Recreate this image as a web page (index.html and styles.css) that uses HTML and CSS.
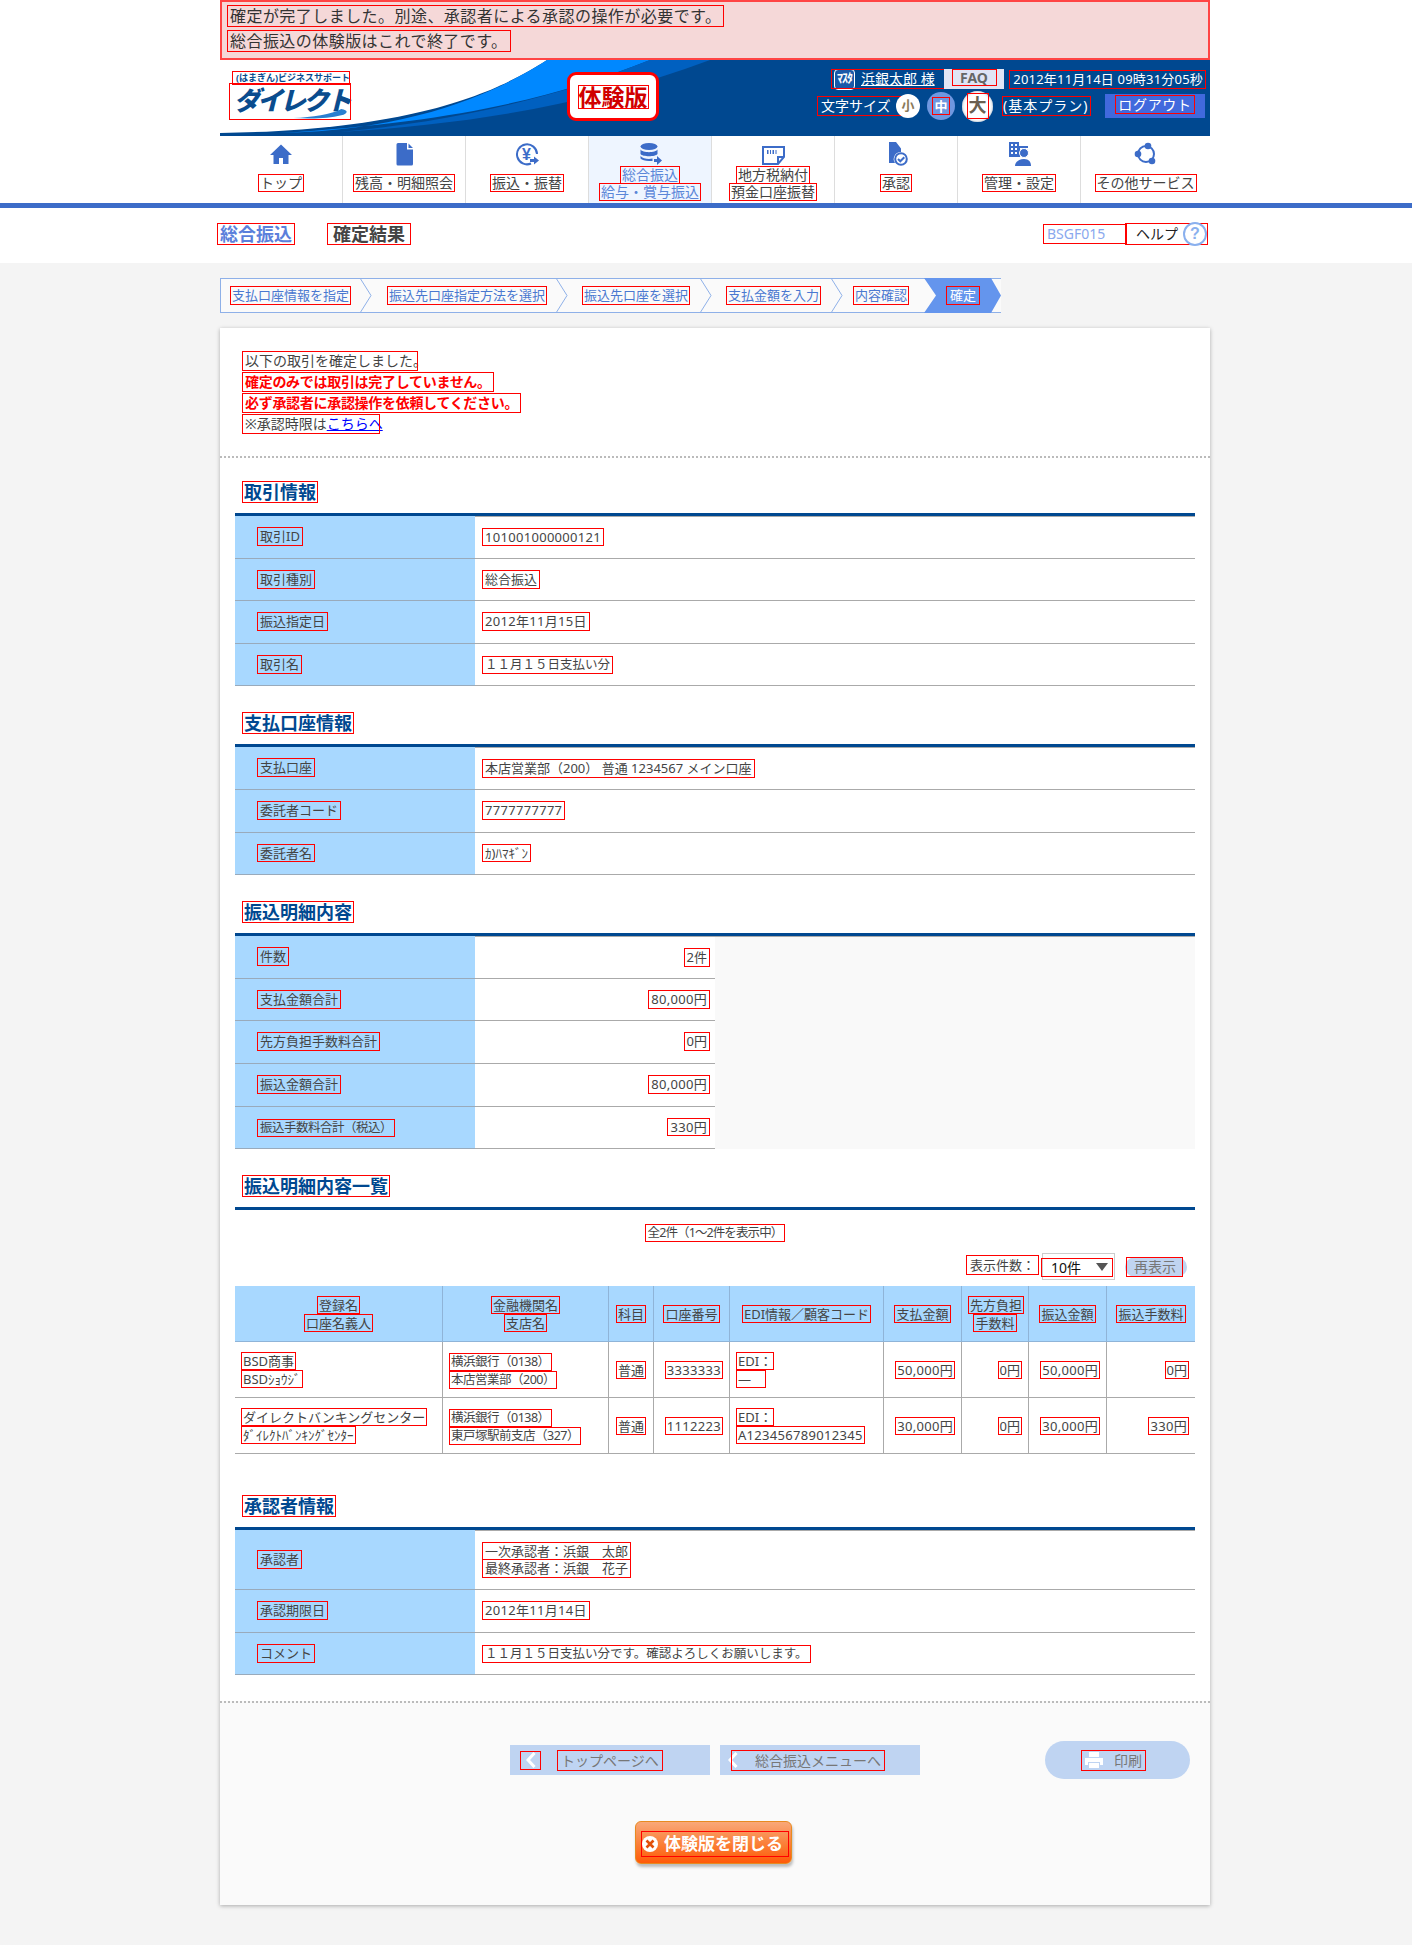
FILE: index.html
```html
<!DOCTYPE html>
<html lang="ja">
<head>
<meta charset="utf-8">
<title>確定結果</title>
<link rel="stylesheet" href="styles.css">
</head>
<body>
<div class="wrap">
  <div class="notice">
    <div><span class="m">確定が完了しました。別途、承認者による承認の操作が必要です。</span></div>
    <div><span class="m">総合振込の体験版はこれで終了です。</span></div>
  </div>
  <header class="head">
    <svg class="swoosh" viewBox="0 0 990 76" preserveAspectRatio="none">
      <path fill="#fff" d="M0 0H327C280 30 200 70 0 73Z"/>
      <path fill="#0088ff" d="M327 0C280 30 200 70 60 73C230 62 330 40 430 0Z"/>
      <path fill="#0060c0" d="M430 0C330 40 230 62 120 72C250 64 370 45 490 0Z"/>
    </svg>
    <div class="logo">
      <span class="m logo-sub">(はまぎん)ビジネスサポート</span>
      <span class="m logo-main">ダイレクト<svg class="logo-swash" viewBox="0 0 60 12"><path fill="#2a7fd0" d="M0 11C20 10 42 7 52 1C60 2 60 6 52 8C38 12 18 12 0 11Z"/></svg></span>
    </div>
    <div class="badge"><span class="m">体験版</span></div>
    <div class="head-right">
      <div class="row1">
        <span class="m user"><span class="master">ﾏｽﾀ</span><a class="uname">浜銀太郎 様</a></span>
        <span class="faq"><span class="m">FAQ</span></span>
        <span class="m date">2012年11月14日 09時31分05秒</span>
      </div>
      <div class="row2">
        <span class="m fs-label">文字サイズ</span>
        <span class="c c-s">小</span>
        <span class="c c-m"><span class="m">中</span></span>
        <span class="c c-l"><span class="m">大</span></span>
        <span class="m plan">(基本プラン)</span>
        <span class="logout"><span class="m">ログアウト</span></span>
      </div>
    </div>
  </header>
  <nav class="nav">
    <a class="nav-i">
      <svg class="ico" viewBox="0 0 24 24"><path d="M12 2.500 1 13h3.500v9h5.500v-6h4v6h5.500v-9H23z"/></svg>
      <span class="lab"><span class="m">トップ</span></span>
    </a>
    <a class="nav-i">
      <svg class="ico" viewBox="0 0 24 24"><path d="M6 1h9l0 6.500h6V22a1.500 1.500 0 0 1-1.500 1.500H6A1.500 1.500 0 0 1 4.500 22V2.500A1.500 1.500 0 0 1 6 1zM16.500 1.500l4.500 4.500h-4.500z"/></svg>
      <span class="lab"><span class="m">残高・明細照会</span></span>
    </a>
    <a class="nav-i">
      <svg class="ico" viewBox="0 0 24 24"><path class="ln" d="M16 21.500A10 10 0 1 1 22 12"/><text class="yen" x="11.500" y="17.500">¥</text><path d="M15 17h4v-2.500l5 4-5 4V20h-4z"/></svg>
      <span class="lab"><span class="m">振込・振替</span></span>
    </a>
    <a class="nav-i on">
      <svg class="ico" viewBox="0 0 24 24"><ellipse cx="11" cy="4.500" rx="8.500" ry="3.500"/><path d="M2.500 7.500c2 3.500 15 3.500 17 0V12c-2 3-15 3-17 0zM2.500 14c2 3 9 3.500 12 2.500V19H11c-4 0-7-1-8.500-2.500zM16 17h3v-3l5 4.500-5 4.500v-3h-3z"/></svg>
      <span class="lab"><span class="m">総合振込</span><span class="m">給与・賞与振込</span></span>
    </a>
    <a class="nav-i">
      <svg class="ico" viewBox="0 0 24 24"><path class="ln" d="M2 5h21v10l-6 7H2z"/><path d="M16 21v-7h7v2h-5v5zM6 8h1.500v4H6zM9 8h1v4H9zM11.500 8H13v4h-1.500zM14.500 8h1v4h-1z"/></svg>
      <span class="lab"><span class="m">地方税納付</span><span class="m">預金口座振替</span></span>
    </a>
    <a class="nav-i">
      <svg class="ico" viewBox="0 0 24 24"><path d="M5 0h7l5 6.500V10a7 7 0 0 0-6 11H5z"/><circle class="ln" cx="17" cy="17" r="5.800"/><path class="ln" d="m14 17 2.300 2.300 4-4"/></svg>
      <span class="lab"><span class="m">承認</span></span>
    </a>
    <a class="nav-i">
      <svg class="ico" viewBox="0 0 24 24"><path d="M2 0h10v4h9v2H13v9H2z"/><path class="hole" d="M4 2h2v2H4zM8 2h2v2H8zM4 6h2v2H4zM8 6h2v2H8zM4 10h2v2H4zM8 10h2v2H8z"/><circle class="ring" cx="17" cy="11" r="4.500"/><path d="M8 24c0-4 4-7 9-7s7 3 7 7z"/></svg>
      <span class="lab"><span class="m">管理・設定</span></span>
    </a>
    <a class="nav-i">
      <svg class="ico" viewBox="0 0 24 24"><circle class="ln" cx="12" cy="12" r="8"/><circle cx="14" cy="4" r="3.300"/><circle cx="4" cy="12" r="3.300"/><circle cx="18" cy="19" r="3.300"/></svg>
      <span class="lab"><span class="m">その他サービス</span></span>
    </a>
  </nav>
</div>
<div class="rule"></div>
<div class="titlebar">
  <div class="titlebar-in">
    <span class="m t-a">総合振込</span>
    <span class="m t-b">確定結果</span>
    <span class="m code">BSGF015</span>
    <span class="m help">ヘルプ<span class="q">?</span></span>
  </div>
</div>
<main class="wrap">
  <ol class="steps">
    <li class="st st1"><span class="m">支払口座情報を指定</span></li><li class="chev"><svg viewBox="0 0 12 35"><path d="M0 0l11 17.500L0 35"/></svg></li>
    <li class="st st2"><span class="m">振込先口座指定方法を選択</span></li><li class="chev"><svg viewBox="0 0 12 35"><path d="M0 0l11 17.500L0 35"/></svg></li>
    <li class="st st3"><span class="m">振込先口座を選択</span></li><li class="chev"><svg viewBox="0 0 12 35"><path d="M0 0l11 17.500L0 35"/></svg></li>
    <li class="st st4"><span class="m">支払金額を入力</span></li><li class="chev"><svg viewBox="0 0 12 35"><path d="M0 0l11 17.500L0 35"/></svg></li>
    <li class="st st5"><span class="m">内容確認</span></li>
    <li class="st st6"><span class="m">確定</span></li>
  </ol>
  <div class="card">
    <div class="intro">
      <p><span class="m i1">以下の取引を確定しました。</span></p>
      <p class="warn"><span class="m">確定のみでは取引は完了していません。</span></p>
      <p class="warn"><span class="m">必ず承認者に承認操作を依頼してください。</span></p>
      <p><span class="m i4">※承認時限は<a class="lnk">こちらへ</a></span></p>
    </div>

    <section class="sec first">
      <h3><span class="m">取引情報</span></h3>
      <table class="kv">
        <tr><th><span class="m">取引ID</span></th><td><span class="m n">101001000000121</span></td></tr>
        <tr><th><span class="m">取引種別</span></th><td><span class="m">総合振込</span></td></tr>
        <tr><th><span class="m">振込指定日</span></th><td><span class="m n">2012年11月15日</span></td></tr>
        <tr><th><span class="m">取引名</span></th><td><span class="m fz">１１月１５日支払い分</span></td></tr>
      </table>
    </section>

    <section class="sec">
      <h3><span class="m">支払口座情報</span></h3>
      <table class="kv">
        <tr><th><span class="m">支払口座</span></th><td><span class="m">本店営業部（200） 普通 1234567 メイン口座</span></td></tr>
        <tr><th><span class="m">委託者コード</span></th><td><span class="m n">7777777777</span></td></tr>
        <tr><th><span class="m">委託者名</span></th><td><span class="m">ｶ)ﾊﾏｷﾞﾝ</span></td></tr>
      </table>
    </section>

    <section class="sec">
      <h3><span class="m">振込明細内容</span></h3>
      <table class="kv half">
        <tr><th><span class="m">件数</span></th><td class="r"><span class="m">2件</span></td><td class="blank" rowspan="5"></td></tr>
        <tr><th><span class="m">支払金額合計</span></th><td class="r"><span class="m n">80,000円</span></td></tr>
        <tr><th><span class="m">先方負担手数料合計</span></th><td class="r"><span class="m">0円</span></td></tr>
        <tr><th><span class="m">振込金額合計</span></th><td class="r"><span class="m n">80,000円</span></td></tr>
        <tr><th><span class="m fw">振込手数料合計（税込）</span></th><td class="r"><span class="m n">330円</span></td></tr>
      </table>
    </section>

    <section class="sec">
      <h3><span class="m">振込明細内容一覧</span></h3>
      <div class="count"><span class="m fw">全2件（1～2件を表示中）</span></div>
      <div class="ctrl">
        <span class="m ctl-l">表示件数：</span>
        <span class="sel"><span class="m sel-in">10件<i class="tri"></i></span></span>
        <span class="redo"><span class="m">再表示</span></span>
      </div>
      <table class="list">
        <colgroup><col class="c1"><col class="c2"><col class="c3"><col class="c4"><col class="c5"><col class="c6"><col class="c7"><col class="c8"><col class="c9"></colgroup>
        <thead>
          <tr>
            <th><span class="m">登録名</span><br><span class="m">口座名義人</span></th>
            <th><span class="m">金融機関名</span><br><span class="m">支店名</span></th>
            <th><span class="m">科目</span></th>
            <th><span class="m">口座番号</span></th>
            <th><span class="m">EDI情報／顧客コード</span></th>
            <th><span class="m">支払金額</span></th>
            <th><span class="m">先方負担</span><br><span class="m">手数料</span></th>
            <th><span class="m">振込金額</span></th>
            <th><span class="m">振込手数料</span></th>
          </tr>
        </thead>
        <tbody>
          <tr>
            <td><span class="m">BSD商事</span><br><span class="m">BSDｼｮｳｼﾞ</span></td>
            <td><span class="m fw">横浜銀行（0138）</span><br><span class="m fw">本店営業部（200）</span></td>
            <td class="ct"><span class="m">普通</span></td>
            <td class="r"><span class="m n">3333333</span></td>
            <td><span class="m">EDI：</span><br><span class="m dash">—</span></td>
            <td class="r"><span class="m n">50,000円</span></td>
            <td class="r"><span class="m">0円</span></td>
            <td class="r"><span class="m n">50,000円</span></td>
            <td class="r"><span class="m">0円</span></td>
          </tr>
          <tr>
            <td><span class="m">ダイレクトバンキングセンター</span><br><span class="m">ﾀﾞｲﾚｸﾄﾊﾞﾝｷﾝｸﾞｾﾝﾀｰ</span></td>
            <td><span class="m fw">横浜銀行（0138）</span><br><span class="m fw">東戸塚駅前支店（327）</span></td>
            <td class="ct"><span class="m">普通</span></td>
            <td class="r"><span class="m n">1112223</span></td>
            <td><span class="m">EDI：</span><br><span class="m n">A123456789012345</span></td>
            <td class="r"><span class="m n">30,000円</span></td>
            <td class="r"><span class="m">0円</span></td>
            <td class="r"><span class="m n">30,000円</span></td>
            <td class="r"><span class="m n">330円</span></td>
          </tr>
        </tbody>
      </table>
    </section>

    <section class="sec last">
      <h3><span class="m">承認者情報</span></h3>
      <table class="kv">
        <tr class="tall"><th><span class="m">承認者</span></th><td><span class="m">一次承認者：浜銀　太郎</span><br><span class="m">最終承認者：浜銀　花子</span></td></tr>
        <tr><th><span class="m">承認期限日</span></th><td><span class="m n">2012年11月14日</span></td></tr>
        <tr><th><span class="m">コメント</span></th><td><span class="m fz">１１月１５日支払い分です。確認よろしくお願いします。</span></td></tr>
      </table>
    </section>

    <div class="foot">
      <div class="actions">
        <a class="btn btn1"><span class="m cm"><svg class="cv" viewBox="0 0 10 16"><path d="M8.500 1 2 8l6.500 7"/></svg></span><span class="m">トップページへ</span></a>
        <a class="btn btn2"><span class="m bm"><svg class="cv" viewBox="0 0 10 16"><path d="M8.500 1 2 8l6.500 7"/></svg><span class="bt">総合振込メニューへ</span></span></a>
        <a class="print"><span class="m pm"><svg class="pr" viewBox="0 0 18 16"><path fill="#fff" d="M4 0h10v5H4zM0 6h18v7h-3v-3H3v3H0zM4 11h10v5H4z"/></svg><span>印刷</span></span></a>
      </div>
      <a class="close"><span class="m cl"><svg class="x" viewBox="0 0 16 16"><circle cx="8" cy="8" r="8" fill="#fff"/><path d="m4.500 4.500 7 7m0-7-7 7" stroke="#e2500a" stroke-width="2.600" fill="none"/></svg>体験版を閉じる</span></a>
    </div>
  </div>
</main>
</body>
</html>
```
FILE: styles.css
```css
*{box-sizing:border-box}
html,body{margin:0;padding:0}
body{background:#f4f4f4;color:#444;font:13px/1.35 "Noto Sans","Noto Sans CJK JP",sans-serif;height:1945px;overflow:hidden;position:relative}
body::before{content:"";position:absolute;left:0;right:0;top:0;height:203px;background:#fff;z-index:-1}
.wrap{width:990px;margin-left:220px}
.m{display:inline-block;outline:1px solid #f00;padding:0 2px;line-height:1.3}
.n{letter-spacing:.3px}
.fw{font-size:12.500px;letter-spacing:-.5px}
.fz{font-size:12.500px}

.notice{height:60px;background:#f5d8d8;border:2px solid #f44;padding:2px 6px 0;font-size:16px;letter-spacing:.45px;color:#333;line-height:24px}
.notice div{height:24.500px}
.notice .m{line-height:20px}

.head{position:relative;height:76px;background:#004890;display:flex;overflow:hidden}
.swoosh{position:absolute;inset:0;width:100%;height:100%}
.logo{position:relative;width:135px;margin-left:11px;padding-top:12px;display:flex;flex-direction:column;align-items:flex-start;color:#0a4c8e}
.logo-sub{font-size:9px;font-weight:700;width:116px;height:12px;line-height:12px;white-space:nowrap;padding:0 3px;margin-left:2px;outline-offset:0}
.logo-main{position:relative;margin:0 0 0 -1px;width:120px;height:35px;font-size:26px;font-weight:900;font-style:italic;line-height:33px;letter-spacing:-3px;white-space:nowrap;padding:0 4px}
.logo-swash{position:absolute;right:0;bottom:0;width:58px;height:11px}
.badge{position:relative;margin:12px 0 0 201px;width:92px;height:49px;background:#fff;border:3px solid #f00;border-radius:9px;display:flex;align-items:center;justify-content:center;color:#d00000;font-size:23px;font-weight:700}
.badge .m{padding:0;line-height:22px}
.head-right{position:relative;margin-left:auto;padding:9px 5px 0 0;color:#fff;display:flex;flex-direction:column;align-items:flex-end;gap:5px}
.row1,.row2{display:flex;align-items:center;white-space:nowrap}
.row1{height:20px;font-size:13.500px}
.user{display:inline-flex;align-items:center;width:115px;height:18px;padding:0 0 0 2px}
.master{width:21px;height:21px;flex:none;border:1.500px solid #fff;border-radius:4px;background:#1a5aa8;font-size:12px;font-weight:700;line-height:18px;text-align:center;overflow:hidden;letter-spacing:-1px}
.uname{text-decoration:underline;margin-left:6px;font-size:14px}
.faq{width:60px;height:20px;background:#e0e4f5;color:#666;font-weight:700;font-size:14px;text-align:center;margin-left:-3px;margin-right:6px}
.faq .m{line-height:15px;width:43px;padding:0}
.date{font-size:13px;letter-spacing:.2px;line-height:17px;padding:0 2px;width:195px;text-align:right}
.row2{height:24px}
.fs-label{font-size:14px;padding:0 18px 0 3px;margin-right:-10px;line-height:18px;width:88px}
.c{display:flex;align-items:center;justify-content:center;border-radius:50%;font-weight:700;flex:none}
.c .m{padding:0 1px}
.c-s{width:24px;height:24px;background:#fff;color:#8a7a5a;font-size:13px;margin-right:7px}
.c-m{width:28px;height:28px;background:#6f97e0;color:#fff;font-size:13px;margin-right:7px}
.c-l{width:31px;height:31px;background:#fff;color:#6a5f50;font-size:18px;box-shadow:inset 0 0 3px #9ab;margin-right:10px}
.plan{font-size:14px;padding:0;margin-right:15px;line-height:18px;letter-spacing:1px;width:87px}
.logout{width:100px;height:24px;background:#4169dd;font-size:14px;text-align:center;letter-spacing:.7px;padding-top:2px}
.logout .m{line-height:17px;padding:0 2px}

.nav{display:flex;height:67px;background:#fff}
.nav-i{width:123px;flex:none;display:flex;flex-direction:column;align-items:center;border-right:1px solid #ddd;padding-top:6px;color:#444;font-size:14px}
.nav-i:last-child{border-right:0;flex:1}
.nav-i.on{background:#eef5ff;color:#5a86d8}
.ico{width:24px;height:24px;fill:#3c6cc8;flex:none}
.ico .ln{fill:none;stroke:#3c6cc8;stroke-width:2}
.ico .hole{fill:#fff}
.ico .ring{stroke:#fff;stroke-width:1}
.yen{font:700 16px "Liberation Sans",sans-serif;text-anchor:middle;fill:#3c6cc8}
.lab{flex:1;display:flex;flex-direction:column;align-items:center;justify-content:center;padding-bottom:3px}
.lab .m{line-height:16px;padding:0 1px;white-space:nowrap}
.lab .m+.m{margin-top:1px}

.rule{height:5px;background:#3c6cc8}
.titlebar{height:55px;background:#fff}
.titlebar-in{width:990px;margin-left:218px;height:100%;display:flex;align-items:center;font-size:18px;padding-bottom:3px}
.t-a{color:#5b7fdb;font-weight:700;line-height:20px}
.t-b{color:#444;font-weight:700;margin-left:34px;line-height:20px;padding:0 5px}
.code{margin-left:auto;font-size:14px;color:#8aa8ee;width:82px;line-height:18px;padding:0 3px}
.help{position:relative;font-size:14px;color:#222;width:81px;line-height:20px;padding-left:10px;margin-right:1px}
.q{position:absolute;right:0;top:-2px;width:24px;height:24px;border:2.500px solid #8ab0ee;border-radius:50%;text-align:center;font:700 16px/19px "Liberation Sans",sans-serif;color:#8ab0ee}

.steps{list-style:none;margin:15px 0 0;padding:0;display:flex;height:35px;width:781px;font-size:13px;color:#4a78d0;background:#fafafa;box-shadow:inset 0 1px #8eb0e8,inset 0 -1px #8eb0e8,inset 1px 0 #8eb0e8}
.st{display:flex;align-items:center;flex:none;white-space:nowrap}
.chev{flex:none;width:12px;height:35px}
.chev svg{display:block;width:12px;height:35px;fill:none;stroke:#8eb0e8}
.st .m{padding:0 1px;line-height:17px}
.st1{width:140px;padding-left:11px}
.st2{width:184px;padding-left:16px}
.st3{width:132px;padding-left:15px}
.st4{width:119px;padding-left:15px}
.st5{width:81px;padding-left:11px}
.st6{width:77px;background:#6495ed;color:#fff;padding-left:23px;clip-path:polygon(0 0,calc(100% - 10px) 0,100% 50%,calc(100% - 10px) 100%,0 100%,12px 50%)}
.st6 .m{width:32px;text-align:center}

.card{margin-top:15px;height:1577px;background:#fff;box-shadow:0 1px 4px rgba(0,0,0,.3);display:flex;flex-direction:column}
.intro{height:130px;padding:22px 0 0 23px;border-bottom:2px dotted #bbb;font-size:14px;line-height:21px}
.intro p{margin:0}
.intro .m{line-height:18px;white-space:nowrap}
.warn{color:#f00;font-weight:700;letter-spacing:-.3px}
.i1{width:174px}
.i4{width:136px}
.lnk{color:#00f;text-decoration:underline}

.sec{margin:3px 15px 0}
.sec.first{margin-top:0}
.sec.last{margin-top:18px}
.sec h3{margin:0;height:58px;padding:21px 0 0 8px;font-size:18px;line-height:26px;font-weight:700;color:#004890;border-bottom:3px solid #004890}
.sec h3 .m{line-height:20px;padding:0 1px}

table{border-collapse:separate;border-spacing:0;width:960px;table-layout:fixed}
.kv th{width:240px;height:42.600px;background:#a8d8ff;font-weight:400;text-align:left;padding:0 0 0 23px;border-bottom:1px solid #9ab}
.kv td{height:42.600px;padding:0 0 0 8px;border-bottom:1px solid #aaa;color:#444}
.kv tr:first-child td{border-top:1px solid #aaa}
.kv .tall th,.kv .tall td{height:60px}
.half td{width:240px}
.half td.r{text-align:right;padding:0 6px 0 0}
.kv td.blank{width:auto;background:#f9f9f9;border:0}

.count{height:43px;padding:12px 0 0;text-align:center;line-height:20px}
.count .fw{letter-spacing:-.9px}
.ctrl{height:27px;margin-bottom:6px;display:flex;align-items:center;justify-content:flex-end;padding-right:8px;font-size:14px}
.ctrl .ctl-l{font-size:13px;line-height:18px;padding:0 3px;margin-top:-3px;margin-right:4px}
.sel{width:73px;height:27px;border:1px solid #ccc;padding-top:5px;color:#111;margin-right:10px}
.sel-in{width:70px;margin-left:-1px;padding-left:9px;line-height:17px;position:relative;height:17px}
.tri{position:absolute;right:4px;top:4px;border:6px solid transparent;border-top:8px solid #555;border-bottom:0}
.redo{width:62px;height:20px;background:#c0d4f0;border-radius:10px;color:#777;padding-left:2px;line-height:20px}
.redo .m{line-height:18px;padding:0 6px 0 7px}

.list th,.list td{height:56px;border-right:1px solid #aaa;padding:0 7px;line-height:18px;white-space:nowrap;overflow:visible}
.list th{background:#a8d8ff;font-weight:400;text-align:center;border-right-color:#8fb4d8;border-bottom:1px solid #8fb4d8}
.list td{border-bottom:1px solid #aaa}
.list tr>:last-child{border-right:0}
.list .m{line-height:16px;padding:0 1px}
.c1{width:208px}.c2{width:166px}.c3{width:45px}.c4{width:76px}.c5{width:154px}.c6{width:78px}.c7{width:67px}.c8{width:78px}.c9{width:88px}
.list .r{text-align:right}
.list .ct{text-align:center;padding:0}
.dash{width:28px}

.foot{flex:1;margin-top:26px;border-top:2px dotted #bbb;background:#fafafa;padding-top:38px}
.actions{display:flex;align-items:center;padding:0 20px 0 290px;color:#777;font-size:14px}
.btn{width:200px;height:30px;background:#bfd4f2;display:flex;align-items:center}
.btn1{padding-left:11px;gap:18px;margin-right:10px}
.btn2{padding-left:12px}
.btn .m{line-height:19px;padding:0 3px}
.cm{width:19px;height:17px;padding:0 5px!important}
.cv{width:10px;height:16px;fill:none;stroke:#fff;stroke-width:3;flex:none}
.cm .cv{display:block}
.bm{display:flex!important;align-items:center;padding:0 3px 0 0!important;position:relative}
.bm .cv{margin-left:-4px}
.bt{margin-left:17px}
.print{margin-left:auto;width:145px;height:38px;border-radius:19px;background:#bfd4f2;display:flex;align-items:center;justify-content:center;padding-right:8px}
.pm{display:flex!important;align-items:center;gap:11px;padding:0 3px!important;line-height:19px}
.pr{width:18px;height:16px}
.close{display:block;width:157px;height:43px;margin:42px 0 0 415px;border:1px solid #e88a20;border-radius:6px;background:linear-gradient(#f9a878,#fb7a30 60%,#ff5a08);box-shadow:1px 3px 3px rgba(0,0,0,.25);color:#fff;font-size:17px;font-weight:700;padding:10px 0 0 6px;line-height:22px}
.cl{display:flex;align-items:center;gap:6px;width:146px;padding:0;height:24px;white-space:nowrap}
.x{width:16px;height:16px;flex:none}
```
